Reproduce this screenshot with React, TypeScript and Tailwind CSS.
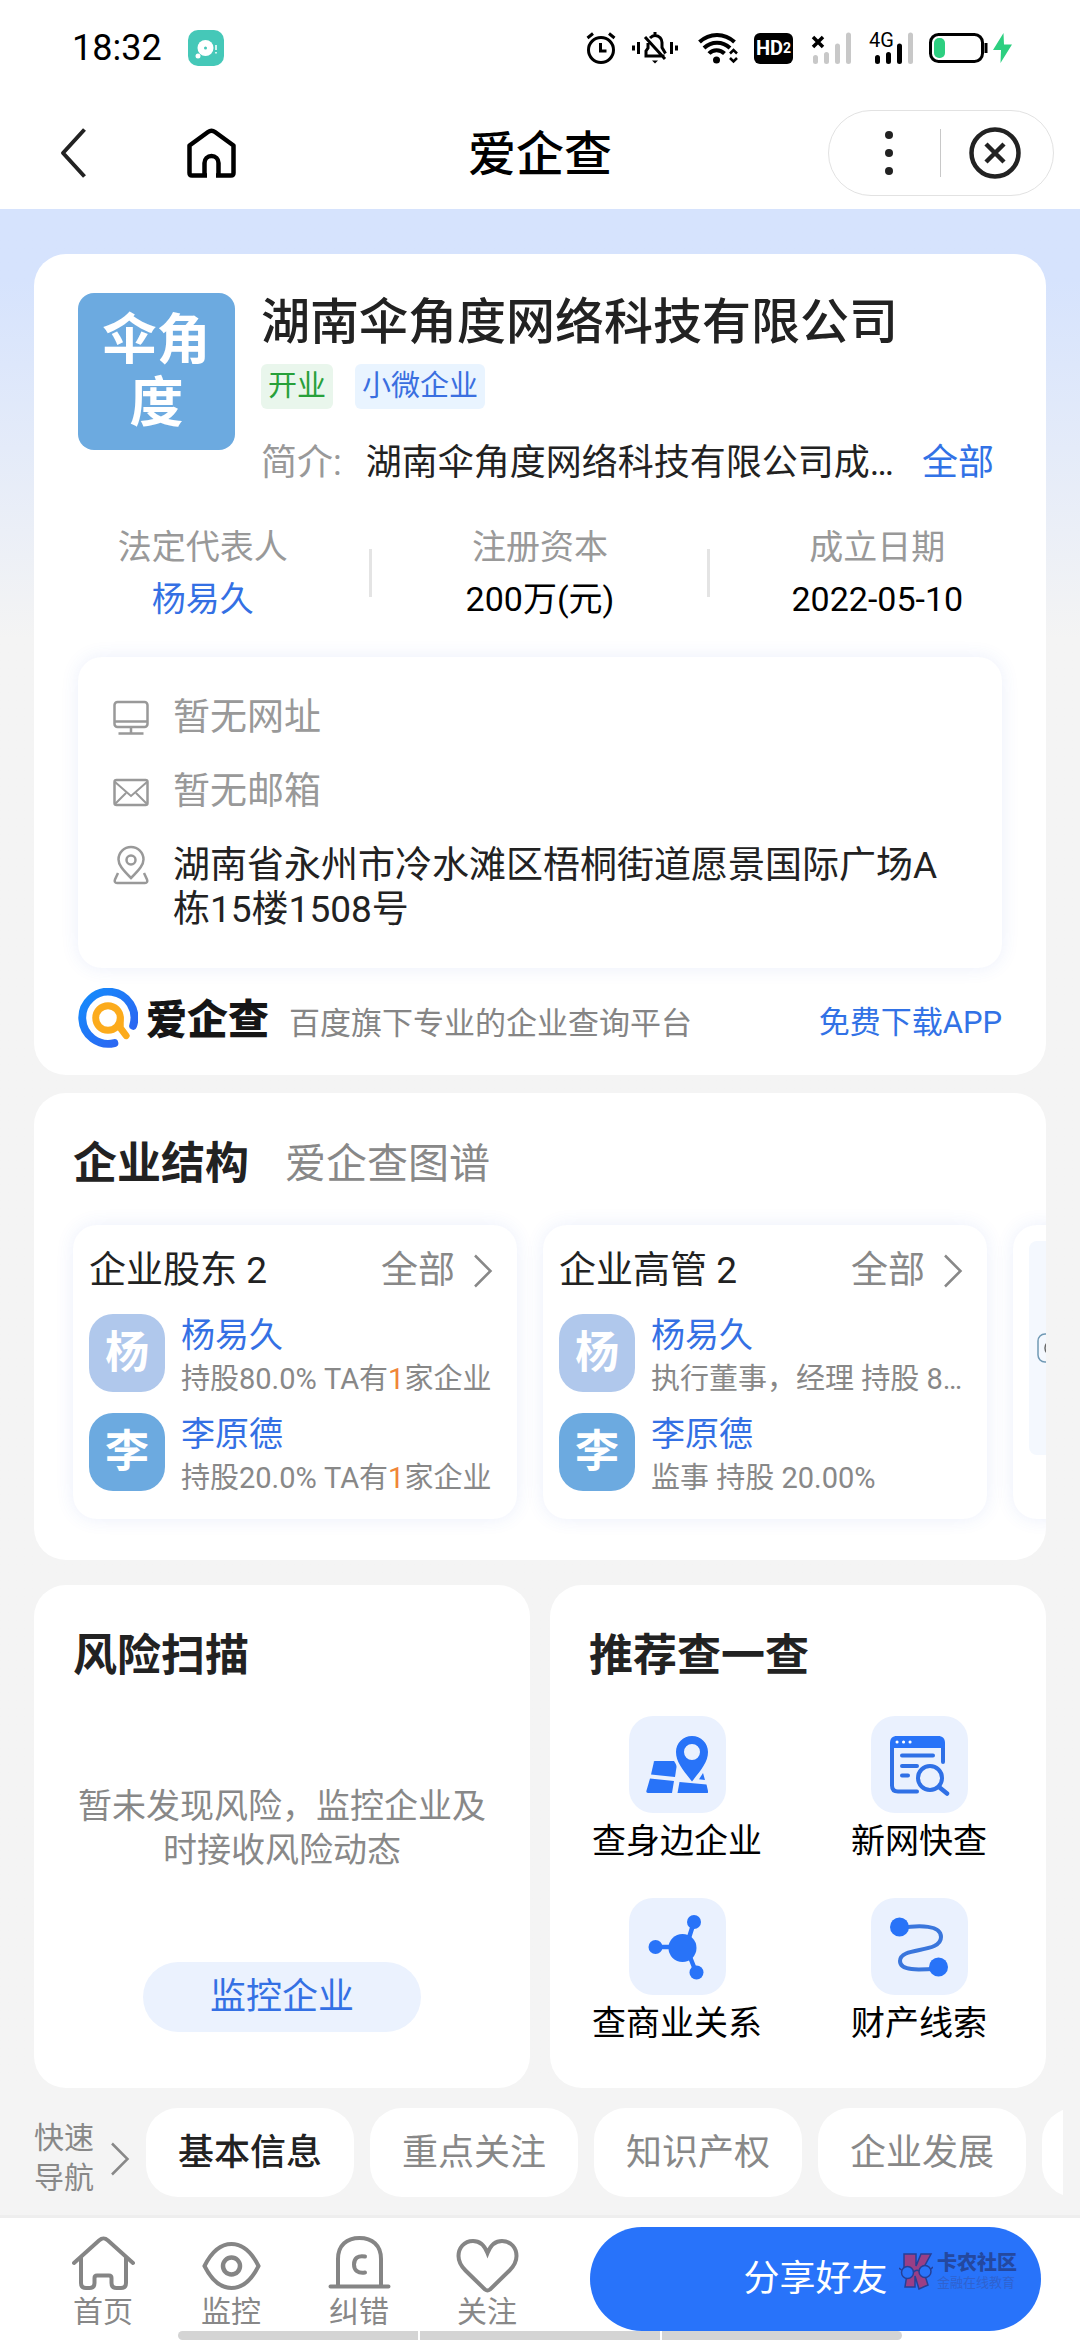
import type { ReactNode } from "react";

interface Person {
  initial: string;
  name: string;
  avatar: string;
  detail: ReactNode;
}

interface PeopleCardProps {
  title: string;
  people: Person[];
}

const STATS = [
  { label: "法定代表人", value: "杨易久", link: true },
  { label: "注册资本", value: "200万(元)", link: false },
  { label: "成立日期", value: "2022-05-10", link: false },
];

const holding = (share: string) => (
  <>
    持股{share} TA有<span className="text-[#f08537]">1</span>家企业
  </>
);

const SHAREHOLDERS: Person[] = [
  { initial: "杨", name: "杨易久", avatar: "bg-[#b0c8ec]", detail: holding("80.0%") },
  { initial: "李", name: "李原德", avatar: "bg-[#6caae0]", detail: holding("20.0%") },
];

const EXECUTIVES: Person[] = [
  { initial: "杨", name: "杨易久", avatar: "bg-[#b0c8ec]", detail: "执行董事，经理 持股 80.00%" },
  { initial: "李", name: "李原德", avatar: "bg-[#6caae0]", detail: "监事 持股 20.00%" },
];

const QUICK_NAV = ["基本信息", "重点关注", "知识产权", "企业发展", "经营状况"];

/* ---------- icons ---------- */

function StatusIcons() {
  return (
    <div className="flex items-center">
      {/* Alarm */}
      <svg width="30" height="32" viewBox="0 0 30 32" fill="none" stroke="#000" strokeWidth="3">
        <circle cx="15" cy="18" r="12.5" />
        <path d="M1.5 6 7 1.5M28.500 6 23 1.500M14.500 11v8h6" />
      </svg>
      {/* Muted bell */}
      <svg className="ml-4" width="46" height="32" viewBox="0 0 46 32" fill="none" stroke="#000" strokeWidth="3">
        <path d="M1.500 13.500v5M6.500 10v12M44.500 13.500v5M39.500 10v12" />
        <path d="M12.500 24h20M14 24v-5l2-3v-5M18 6c2-2 3-2.500 5-2.500 4.500 0 7 3.500 7 7v5l3.500 6M13 5l20 22M23 0v3" />
        <path d="M20 28.500h6l-3 3z" fill="#000" stroke="none" />
      </svg>
      {/* Wifi */}
      <svg className="ml-5" width="40" height="32" viewBox="0 0 40 32" fill="none" stroke="#000" strokeWidth="4">
        <path d="M1.500 10c10-9.500 25-9.500 35 0M6 16c7.500-7 18.500-7 26 0M11 21.500c4-4.500 11-4.500 15.500 0" />
        <circle cx="18.500" cy="28" r="3.500" fill="#000" stroke="none" />
        <path d="m32 21.500 3.500-3.500 3.500 3.500M32 26l3.500 3.500L39 26" strokeWidth="2.500" />
      </svg>
      <span className="ml-4 flex h-[31px] w-[39px] items-center justify-center rounded-md bg-black font-['Roboto'] text-xl font-bold text-white">
        HD<span className="text-sm">2</span>
      </span>
      {/* SIM 1, no service */}
      <svg className="ml-[18px]" width="40" height="32" viewBox="0 0 40 32" fill="none">
        <path d="M4.500 25.500v4M15.500 22.500v7M26.500 14v15.500M37.500 3v26.500" stroke="#c8c8c8" strokeWidth="5" strokeLinecap="round" />
        <path d="m2 5 10 10M12 5 2 15" stroke="#000" strokeWidth="3.500" />
      </svg>
      {/* SIM 2 */}
      <div className="relative ml-[18px] h-8 w-11">
        <span className="absolute -top-1 left-0 font-['Roboto'] text-xl leading-6 text-black">4G</span>
        <svg className="ml-1" width="40" height="32" viewBox="0 0 40 32" fill="none" strokeWidth="5" strokeLinecap="round">
          <path d="M4.500 25.500v4M15.500 22.500v7M26.500 14v15.500" stroke="#000" />
          <path d="M37.500 3v26.500" stroke="#c8c8c8" />
        </svg>
      </div>
      {/* Battery */}
      <svg className="ml-4" width="84" height="32" viewBox="0 0 84 32" fill="none">
        <rect x="1.500" y="2.500" width="52" height="27" rx="8" stroke="#000" strokeWidth="3" />
        <rect x="5" y="6" width="11" height="20" rx="5" fill="#2dcf80" />
        <path d="M57 11v10" stroke="#000" strokeWidth="3" />
        <path d="M74.500 1 64 18h8l-.500 13L83 12.500h-8z" fill="#2dcf80" />
      </svg>
    </div>
  );
}

function ChevronRight() {
  return (
    <svg width="20" height="34" viewBox="0 0 20 34" fill="none" stroke="#888" strokeWidth="2.500">
      <path d="M2 1.500 17.500 17 2 32.500" />
    </svg>
  );
}

function MonitorIcon() {
  return (
    <svg width="36" height="44" viewBox="0 0 36 44" fill="none" stroke="#999" strokeWidth="2.500">
      <rect x="1.500" y="6" width="33" height="25" rx="3" />
      <path d="M1 25.500h34M18 31v6M5.500 37.500h25" />
    </svg>
  );
}

function MailIcon() {
  return (
    <svg width="36" height="44" viewBox="0 0 36 44" fill="none" stroke="#999" strokeWidth="2.500">
      <rect x="1.500" y="10" width="33" height="25" rx="2" />
      <path d="m2 12 16 14 16-14M2 34l11-11M34 34 23 23" strokeWidth="2" />
    </svg>
  );
}

function PlaceIcon() {
  return (
    <svg width="36" height="44" viewBox="0 0 36 44" fill="none" stroke="#999" strokeWidth="2.500">
      <path d="M18 34C9 25 5.500 20.500 5.500 15.500a12.500 12.500 0 0 1 25 0C30.500 20.500 27 25 18 34z" />
      <circle cx="18" cy="16" r="4.500" />
      <path d="M5 29 2 35.500c-.800 2 0 3.500 2 3.500h28c2 0 2.800-1.500 2-3.500L31 29" />
    </svg>
  );
}

function BrandLogo() {
  return (
    <svg width="60" height="60" viewBox="0 0 61 61" fill="none" strokeLinecap="round">
      <defs>
        <linearGradient id="brandBlue" x1="0" y1="0" x2="1" y2="1">
          <stop offset="0" stopColor="#148cfc" />
          <stop offset="1" stopColor="#3060f0" />
        </linearGradient>
      </defs>
      <path d="M56 38.500A26.500 26.500 0 1 0 37 56" stroke="url(#brandBlue)" strokeWidth="8" />
      <circle cx="30.500" cy="30.500" r="12.500" stroke="#fcab1c" strokeWidth="7" />
      <path d="M43 30.500v10l6 8" stroke="#fcab1c" strokeWidth="7" strokeLinejoin="round" />
    </svg>
  );
}

function MapIcon() {
  return (
    <svg width="62" height="62" viewBox="0 0 62 62" fill="#2873f8">
      <path d="M8.500 27h19.500c2 3 2.500 4 2.500 6l-1.500 10L5 40.500l3-13z" />
      <path d="m4 44.500 24 2.500-2 12H2c-1.500 0-2-1-1.500-2.500zM33.500 48l27 2.500 1.500 6.500c.300 1.200 0 2-1 2H31.500z" />
      <path d="M57 39l2 7-6-.800z" />
      <path fillRule="evenodd" d="M46 2c9 0 16 7 16 16 0 10-7 18-16 29.500C37 36 30 28 30 18 30 9 37 2 46 2zm0 8a8 8 0 1 0 0 16 8 8 0 0 0 0-16z" />
    </svg>
  );
}

function BrowserSearchIcon() {
  return (
    <svg width="62" height="62" viewBox="0 0 62 62" fill="none" stroke="#2f70e6" strokeWidth="4" strokeLinecap="round">
      <path d="M55 28V12M29 57.500H10c-4 0-6-2-6-6V10" />
      <path d="M2 14V9c0-4.500 2.500-7 7-7h41c4.500 0 7 2.500 7 7v5z" fill="#2873f8" stroke="none" />
      <path d="M14 21.500h31M14 32h15M14 41.500h6" />
      <circle cx="42" cy="44" r="12" />
      <path d="m51 53 8 6.500" strokeWidth="4.500" />
      <path d="M9 8h.100M15.500 8h.100M22 8h.100" stroke="#fff" strokeWidth="3" />
    </svg>
  );
}

function NetworkIcon() {
  return (
    <svg width="62" height="66" viewBox="0 0 62 66" fill="#2873f8" stroke="#2873f8">
      <path d="M10 33h26M40 33 48 8M40 33 50 58" strokeWidth="4.500" />
      <circle cx="9.500" cy="33" r="7" stroke="none" />
      <circle cx="36.500" cy="34" r="14" stroke="none" />
      <circle cx="48" cy="8" r="7" stroke="none" />
      <circle cx="50.500" cy="58.500" r="7" stroke="none" />
    </svg>
  );
}

function RouteIcon() {
  return (
    <svg width="62" height="62" viewBox="0 0 62 62" fill="none">
      <path d="M12 12c20-3 41-3 41 9 0 17-41 9-41 24 0 10 18 9 38 7.500" stroke="#3a76dc" strokeWidth="4" />
      <circle cx="11.500" cy="11" r="9.500" fill="#2873f8" />
      <circle cx="50.500" cy="51" r="9.500" fill="#2873f8" />
    </svg>
  );
}

const SHORTCUTS = [
  { label: "查身边企业", icon: <MapIcon /> },
  { label: "新网快查", icon: <BrowserSearchIcon /> },
  { label: "查商业关系", icon: <NetworkIcon /> },
  { label: "财产线索", icon: <RouteIcon /> },
];

const TABS = [
  {
    label: "首页",
    icon: (
      <path d="M2 28 27 5.500c3.500-3 5.500-3 9 0L61 28M9 22v26c0 3.500 1.500 5 5 5h3.500c3.500 0 5-1.500 5-5v-5c0-1.500 1-2.500 2.500-2.500h12c1.500 0 2.500 1 2.500 2.500v5c0 3.500 1.500 5 5 5H49c3.500 0 5-1.500 5-5V22" />
    ),
  },
  {
    label: "监控",
    icon: (
      <>
        <path d="M4.500 31C11 18 20 9 31.500 9S52 18 58.500 31C52 44 43 53 31.500 53S11 44 4.500 31z" />
        <circle cx="31.500" cy="31" r="8.500" strokeWidth="4.500" />
      </>
    ),
  },
  {
    label: "纠错",
    icon: (
      <>
        <path d="M10 51V24c0-14 9-21 21.500-21S53 10 53 24v27M2.500 51.500h58" />
        <path d="M37 21.500c-7-1.500-11 2-11 8s4 9 11 8" strokeWidth="4" />
      </>
    ),
  },
  {
    label: "关注",
    icon: (
      <path d="M31.500 18C28 9 23 6 17 6 8 6 2.500 13 2.500 21c0 6 3 10.500 7 14.500L29 54.500c2 1.500 3 1.500 5 0l19.500-19c4-4 7-8.500 7-14.500 0-8-5.500-15-14.500-15-6 0-11 3-14.500 12z" />
    ),
  },
];

/* ---------- sections ---------- */

function StatusBar() {
  return (
    <div className="flex h-24 items-center justify-between bg-white pr-[67px] pl-[72px]">
      <div className="flex items-center gap-[26px]">
        <span className="text-4xl text-black">18:32</span>
        <svg width="36" height="36" viewBox="0 0 36 36">
          <rect width="36" height="36" rx="10" fill="#45c8b8" />
          <circle cx="17.500" cy="18" r="8" fill="#fff" />
          <circle cx="17.500" cy="18" r="1.500" fill="#45c8b8" />
          <circle cx="10" cy="26" r="2.500" fill="#fff" />
          <path d="M28 15v5M28 22v1.500" stroke="#fff" strokeWidth="1.500" />
        </svg>
      </div>
      <StatusIcons />
    </div>
  );
}

function TitleBar() {
  return (
    <header className="grid h-[113px] grid-cols-[1fr_auto_1fr] items-center bg-white px-[26px]">
      <div className="flex items-center gap-[101px] pl-[34px]">
        <button aria-label="返回">
          <svg width="26" height="50" viewBox="0 0 26 50" fill="none" stroke="#222" strokeWidth="4" strokeLinejoin="round">
            <path d="M24.500 1.500 3 25l21.500 23.500" />
          </svg>
        </button>
        <button aria-label="主页">
          <svg width="49" height="50" viewBox="0 0 49 50" fill="none" stroke="#000" strokeWidth="4.500" strokeLinejoin="round">
            <path d="M20 47.500H5c-1.500 0-2.500-1-2.500-2.500V17.500L21 4c2.500-1.800 4.500-1.800 7 0l18.500 13.500V45c0 1.500-1 2.500-2.500 2.500H29M17.500 48V35c0-4 3-7 7-7s7 3 7 7v13" />
          </svg>
        </button>
      </div>
      <h1 className="pt-1 text-5xl font-medium text-black">爱企查</h1>
      <div className="flex h-[86px] w-[226px] items-center justify-self-end rounded-full border border-[#e2e2e2]">
        <button aria-label="更多" className="flex w-[111px] flex-col items-center gap-2.5 pl-2">
          <span className="size-2 rounded-full bg-[#222]" />
          <span className="size-2 rounded-full bg-[#222]" />
          <span className="size-2 rounded-full bg-[#222]" />
        </button>
        <span className="h-12 w-px bg-[#c8c8c8]" />
        <button aria-label="关闭" className="flex flex-1 justify-center pr-1">
          <svg width="52" height="52" viewBox="0 0 52 52" fill="none" stroke="#222" strokeWidth="4.500">
            <circle cx="26" cy="26" r="23.500" />
            <path d="m17 17 18 18M35 17 17 35" />
          </svg>
        </button>
      </div>
    </header>
  );
}

function CompanyCard() {
  return (
    <section className="rounded-[32px] bg-white px-11 pt-[39px] pb-[27px]">
      <div className="flex gap-[26px]">
        <div className="flex size-[157px] flex-none items-center justify-center rounded-2xl bg-[#6caae0] px-6 text-center text-[54px] leading-[63px] font-bold text-white">
          伞角度
        </div>
        <div className="min-w-0 flex-1">
          <h2 className="text-[49px] leading-[60px] font-medium text-[#222]">湖南伞角度网络科技有限公司</h2>
          <div className="mt-[11px] flex gap-[22px] text-[29px] leading-[45px]">
            <span className="rounded-md bg-[#e9f6ec] px-[7px] text-[#27a03a]">开业</span>
            <span className="rounded-md bg-[#e9f4ff] px-[7px] text-[#3a6fe0]">小微企业</span>
          </div>
          <div className="mt-8 flex items-center pr-2 text-[36px] leading-11">
            <span className="flex-none text-[#999]">简介:</span>
            <p className="ml-6 min-w-0 flex-1 truncate text-[#222]">湖南伞角度网络科技有限公司成立于2022年05月10日</p>
            <a href="#intro" className="ml-4 flex-none text-[#3272e6]">全部</a>
          </div>
        </div>
      </div>

      {/* Key figures */}
      <dl className="-mx-11 mt-9 grid grid-cols-3 text-center text-[34px] leading-[52px]">
        {STATS.map((stat, i) => (
          <div key={stat.label} className="relative">
            <dt className="text-[#999]">{stat.label}</dt>
            <dd className={stat.link ? "text-[#3470e4]" : "text-black"}>
              {stat.link ? <a href="#legal">{stat.value}</a> : stat.value}
            </dd>
            {i > 0 && <span className="absolute top-7 -left-0.5 h-12 w-[3px] bg-[#e4e4e4]" />}
          </div>
        ))}
      </dl>

      {/* Contacts */}
      <ul className="mt-8 flex flex-col gap-[30px] rounded-3xl px-[35px] pt-[39px] pb-9 text-[37px] leading-11 shadow-[0_0_18px_rgba(60,100,220,0.10)]">
        <li className="flex gap-6 text-[#999]"><MonitorIcon />暂无网址</li>
        <li className="flex gap-6 text-[#999]"><MailIcon />暂无邮箱</li>
        <li className="flex gap-6 text-[#222]">
          <PlaceIcon />
          <p className="flex-1 pr-6">湖南省永州市冷水滩区梧桐街道愿景国际广场A栋15楼1508号</p>
        </li>
      </ul>

      <div className="mt-5 flex items-center">
        <BrandLogo />
        <span className="ml-2 pt-1 text-[41px] leading-[56px] font-black text-[#161616]">爱企查</span>
        <span className="ml-5 flex-1 pt-3 text-[31px] leading-10 text-[#858585]">百度旗下专业的企业查询平台</span>
        <a href="#app" className="pt-2.5 text-[31px] leading-10 text-[#3272e6]">免费下载APP</a>
      </div>
    </section>
  );
}

function PeopleCard({ title, people }: PeopleCardProps) {
  return (
    <article className="w-[444px] flex-none rounded-3xl px-4 pt-6 pb-6 shadow-[0_0_18px_rgba(60,100,220,0.10)]">
      <div className="flex items-center justify-between pr-2 text-[37px] leading-11">
        <h3 className="text-[#222]">{title}</h3>
        <button className="flex items-center gap-[18px] text-[#888]">
          全部
          <ChevronRight />
        </button>
      </div>
      <ul className="mt-[21px] flex flex-col gap-[17px]">
        {people.map((person) => (
          <li key={person.name} className="flex gap-4">
            <span className={`flex h-[78px] w-[76px] flex-none items-center justify-center rounded-3xl text-[44px] font-bold text-white ${person.avatar}`}>
              {person.initial}
            </span>
            <div className="min-w-0 flex-1">
              <a href="#person" className="block text-[34px] leading-[42px] text-[#3470e4]">{person.name}</a>
              <p className="mt-1.5 truncate text-[29px] leading-[34px] text-[#888]">{person.detail}</p>
            </div>
          </li>
        ))}
      </ul>
    </article>
  );
}

function StructureCard() {
  return (
    <section className="mt-[18px] overflow-hidden rounded-[32px] bg-white pt-[41px] pb-[41px] pl-[39px]">
      <div className="flex items-center gap-9 leading-[60px]">
        <h2 className="text-[44px] font-bold text-[#222]">企业结构</h2>
        <button className="text-[41px] text-[#888]">爱企查图谱</button>
      </div>
      <div className="mt-[31px] flex gap-[26px]">
        <PeopleCard title="企业股东 2" people={SHAREHOLDERS} />
        <PeopleCard title="企业高管 2" people={EXECUTIVES} />
        <article className="w-[444px] flex-none rounded-3xl p-4 shadow-[0_0_18px_rgba(60,100,220,0.10)]">
          <div className="flex h-[214px] items-center rounded-lg bg-[#f4f8fe] pl-2">
            <svg width="30" height="30" viewBox="0 0 30 30" fill="none" stroke="#7099b4" strokeWidth="1.500">
              <rect x="1" y="1" width="28" height="28" rx="7" />
              <circle cx="15" cy="15" r="7" stroke="#666" />
            </svg>
          </div>
        </article>
      </div>
    </section>
  );
}

function RiskCard() {
  return (
    <section className="flex flex-col rounded-[32px] bg-white pt-[41px] pb-14">
      <h2 className="pl-[39px] text-[44px] leading-[60px] font-bold text-[#222]">风险扫描</h2>
      <p className="mt-auto px-11 text-center text-[34px] leading-11 text-[#888]">暂未发现风险，监控企业及时接收风险动态</p>
      <button className="mt-[90px] h-[70px] w-[278px] self-center rounded-full bg-[#ebf2fe] text-[36px] leading-[70px] text-[#3470e4]">
        监控企业
      </button>
    </section>
  );
}

function ShortcutCard() {
  return (
    <section className="rounded-[32px] bg-white pt-[41px] pb-[43px]">
      <h2 className="pl-[39px] text-[44px] leading-[60px] font-bold text-[#222]">推荐查一查</h2>
      <div className="mt-[30px] grid grid-cols-2 gap-y-[35px] px-1.5">
        {SHORTCUTS.map((item) => (
          <button key={item.label} className="flex flex-col items-center gap-1.5 text-[34px] leading-11 text-black">
            <span className="flex size-[97px] items-center justify-center rounded-3xl bg-[#eaf1fe]">{item.icon}</span>
            {item.label}
          </button>
        ))}
      </div>
    </section>
  );
}

function QuickNav() {
  return (
    <nav className="flex items-start pt-5 pr-[17px] pb-4 pl-[34px] text-[#888]">
      <span className="w-[62px] flex-none pt-[10px] text-[30px] leading-[40px]">快速导航</span>
      <span className="mt-[34px] mr-4 ml-[14px] flex-none"><ChevronRight /></span>
      <div className="flex min-w-0 flex-1 gap-4 overflow-hidden">
        {QUICK_NAV.map((label, i) => (
          <button
            key={label}
            className={`h-[89px] w-[208px] flex-none rounded-[32px] bg-white text-[36px] ${
              i === 0 ? "font-medium text-[#222]" : "text-[#888]"
            }`}
          >
            {label}
          </button>
        ))}
      </div>
    </nav>
  );
}

function BottomBar() {
  return (
    <footer className="relative mt-auto flex h-[125px] items-start border-t-[3px] border-[#eee] bg-white pr-[39px] pl-[39px]">
      {TABS.map((tab) => (
        <button key={tab.label} className="flex w-32 flex-col items-center pt-[17px] text-[30px] leading-[34px] text-[#888]">
          <svg width="63" height="60" viewBox="0 0 63 60" fill="none" stroke="#858585" strokeWidth="4" strokeLinecap="round">
            {tab.icon}
          </svg>
          {tab.label}
        </button>
      ))}
      <button className="relative mt-[9px] ml-[39px] h-[104px] flex-1 rounded-full bg-[#2873fa] text-[36px] text-white">
        分享好友
        {/* Community badge */}
        <span className="absolute top-6 right-6 flex items-center gap-1 text-left">
          <svg width="34" height="38" viewBox="0 0 34 38" fill="#9a3f86" stroke="#253f96" strokeWidth="1.500">
            <path d="M5 2h12v12l5-12h10l-8 15 5 16-9 4-4-13v11H6l2-13H5z" />
            <circle cx="8.500" cy="20.500" r="6" fill="#2873fa" />
            <circle cx="26" cy="19.500" r="6" fill="#2873fa" />
            <path d="M14.500 20q3-3 5.500-1M2.500 18 0 16M32 17l2-2" fill="none" />
          </svg>
          <span className="flex flex-col">
            <span className="text-xl leading-6 font-black text-[#24489f]">卡农社区</span>
            <span className="text-[13px] leading-4 text-[#2f62cf]">金融在线教育</span>
          </span>
        </span>
      </button>
      {/* Gesture bar */}
      <div className="absolute inset-x-[178px] bottom-0 grid h-[9px] grid-cols-3 gap-0.5 overflow-hidden rounded-l-full rounded-r-full">
        <span className="bg-[#d4d4d4]" />
        <span className="bg-[#d4d4d4]" />
        <span className="bg-[#d4d4d4]" />
      </div>
    </footer>
  );
}

export default function App() {
  return (
    <div className="flex min-h-screen flex-col overflow-x-hidden bg-[#f4f4f4] font-['Roboto','Noto_Sans_CJK_SC',sans-serif]">
      <StatusBar />
      <TitleBar />
      <main className="bg-linear-to-b from-[#d6e3fd] from-[70px] to-[#f4f4f4] to-[430px] px-[34px] pt-[45px]">
        <CompanyCard />
        <StructureCard />
        <div className="mt-[25px] grid grid-cols-2 gap-5">
          <RiskCard />
          <ShortcutCard />
        </div>
      </main>
      <QuickNav />
      <BottomBar />
    </div>
  );
}
